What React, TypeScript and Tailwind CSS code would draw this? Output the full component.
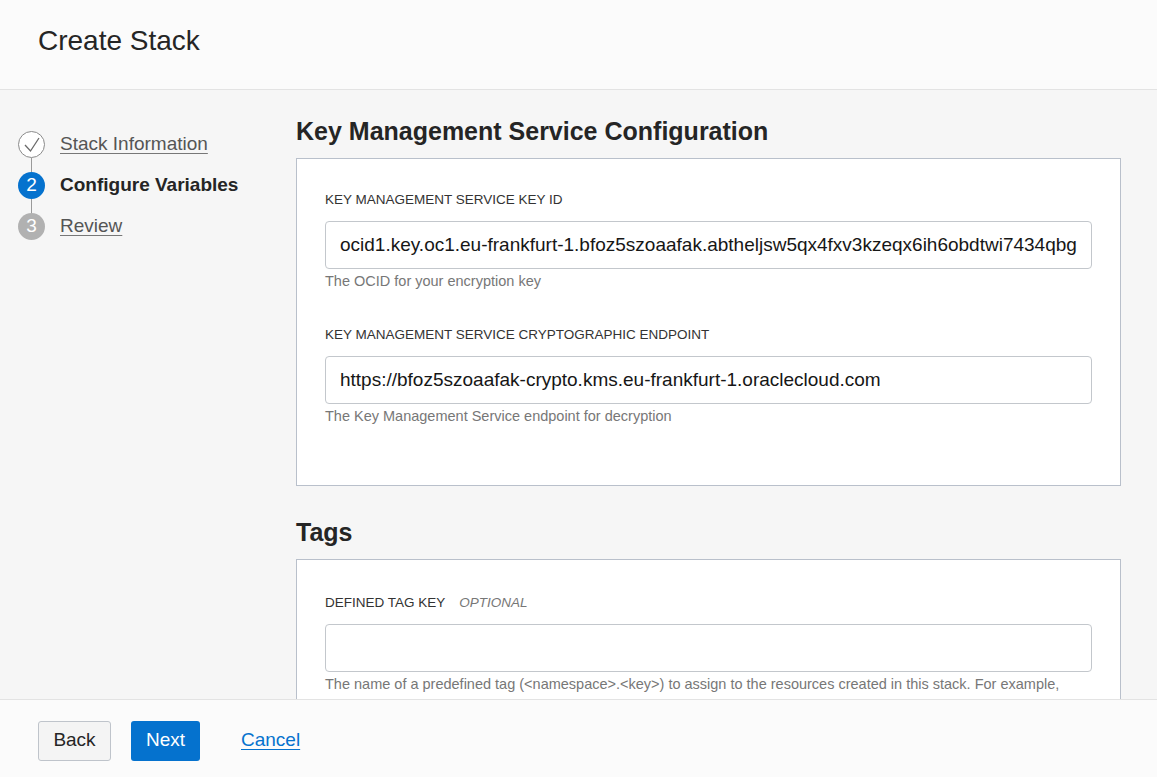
import React from "react";

const font = { fontFamily: '"Liberation Sans", Arial, sans-serif' };

function Steps() {
  return (
    <div className="w-[296px] shrink-0 pl-[18px] pt-[41px]">
      {/* step 1 - done */}
      <div className="flex items-center gap-[15px] h-[27px]">
        <div className="relative w-[27px] h-[27px] rounded-full border border-[#8a8a8a] bg-white">
          <svg className="absolute -left-px -top-px" width="27" height="27" viewBox="0 0 27 27" fill="none">
            <path d="M7 14l5.5 6L21 7" stroke="#6a6a6a" strokeWidth="1.3" />
          </svg>
        </div>
        <a className="text-[19px] text-[#555] underline underline-offset-[3px] decoration-[#777]">Stack Information</a>
      </div>
      <div className="ml-[13px] w-px h-[14px] bg-[#9a9a9a]" />
      {/* step 2 - current */}
      <div className="flex items-center gap-[15px] h-[27px]">
        <div className="w-[27px] h-[27px] rounded-full bg-[#0572ce] text-white text-[19px] flex items-center justify-center">2</div>
        <span className="text-[19px] font-bold text-[#252525]">Configure Variables</span>
      </div>
      <div className="ml-[13px] w-px h-[14px] bg-[#9a9a9a]" />
      {/* step 3 */}
      <div className="flex items-center gap-[15px] h-[27px]">
        <div className="w-[27px] h-[27px] rounded-full bg-[#b1b1b1] text-white text-[19px] flex items-center justify-center">3</div>
        <a className="text-[19px] text-[#555] underline underline-offset-[3px] decoration-[#777]">Review</a>
      </div>
    </div>
  );
}

function Field({ label, optional, value, help }: { label: string; optional?: boolean; value: string; help: string }) {
  return (
    <div>
      <div className="text-[13.5px] text-[#333] h-[16px] leading-[16px]">
        {label}
        {optional && <span className="ml-[14px] italic text-[#777]">OPTIONAL</span>}
      </div>
      <div className="mt-[13px] h-[48px] border border-[#c3c7cc] rounded-[4px] bg-white flex items-center px-[14px] text-[19px] text-[#161616] overflow-hidden whitespace-nowrap">
        {value}
      </div>
      <div className="mt-[3px] text-[14.5px] text-[#777] leading-[18px] whitespace-nowrap">{help}</div>
    </div>
  );
}

export default function App() {
  return (
    <div className="h-[777px] w-full flex flex-col bg-[#f6f6f6] overflow-hidden" style={font}>
      {/* header */}
      <div className="h-[90px] shrink-0 bg-[#fbfbfb] border-b border-[#e3e3e3] flex items-center px-[38px]">
        <h1 className="text-[28px] text-[#252525] -mt-[8px]">Create Stack</h1>
      </div>

      {/* body */}
      <div className="flex-1 flex overflow-hidden">
        <Steps />
        <div className="w-[825px] shrink-0 pt-[26px]">
          <h2 className="text-[25px] font-bold text-[#252525] leading-[30px]">Key Management Service Configuration</h2>
          <div className="mt-[12px] h-[328px] bg-white border border-[#b9c0cb] pl-[28px] pr-[28px] pt-[33px] flex flex-col gap-[37px]">
            <Field
              label="KEY MANAGEMENT SERVICE KEY ID"
              value="ocid1.key.oc1.eu-frankfurt-1.bfoz5szoaafak.abtheljsw5qx4fxv3kzeqx6ih6obdtwi7434qbg"
              help="The OCID for your encryption key"
            />
            <Field
              label="KEY MANAGEMENT SERVICE CRYPTOGRAPHIC ENDPOINT"
              value="https://bfoz5szoaafak-crypto.kms.eu-frankfurt-1.oraclecloud.com"
              help="The Key Management Service endpoint for decryption"
            />
          </div>

          <h2 className="mt-[31px] text-[25px] font-bold text-[#252525] leading-[30px]">Tags</h2>
          <div className="mt-[12px] h-[200px] bg-white border border-[#b9c0cb] pl-[28px] pr-[28px] pt-[35px]">
            <Field
              label="DEFINED TAG KEY"
              optional
              value=""
              help="The name of a predefined tag (<namespace>.<key>) to assign to the resources created in this stack. For example,"
            />
          </div>
        </div>
      </div>

      {/* footer */}
      <div className="h-[78px] shrink-0 bg-[#fbfbfb] border-t border-[#e3e3e3] flex items-center px-[38px] pt-[4px]">
        <button className="h-[40px] w-[73px] rounded-[3px] border border-[#bfc4cb] bg-[#f4f4f4] text-[19px] text-[#252525]">Back</button>
        <button className="ml-[20px] h-[40px] w-[69px] rounded-[3px] bg-[#0572ce] text-[19px] text-white">Next</button>
        <a className="ml-[41px] text-[19px] text-[#0572ce] underline underline-offset-[3px]">Cancel</a>
      </div>
    </div>
  );
}
